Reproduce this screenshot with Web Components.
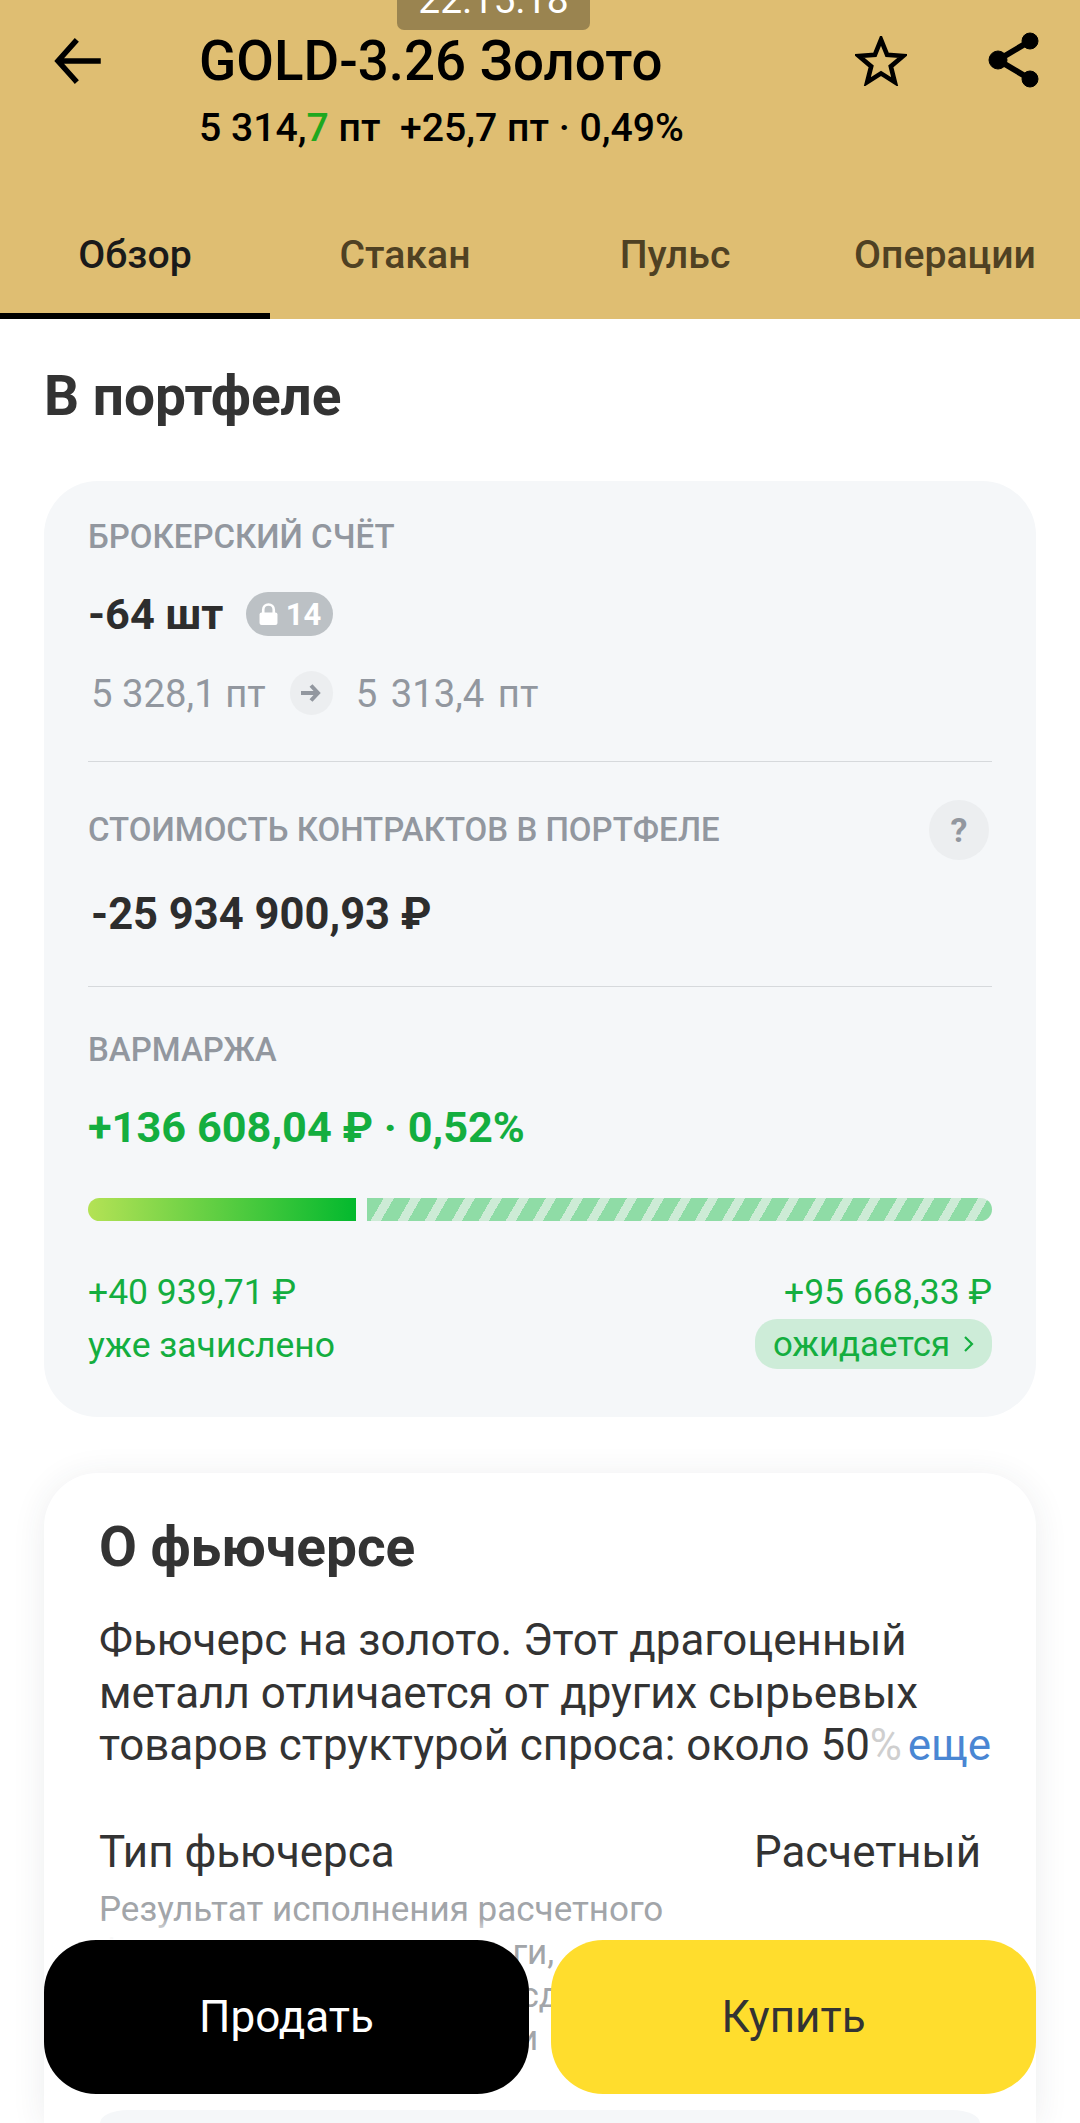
<!DOCTYPE html>
<html lang="ru">
<head>
<meta charset="UTF-8">
<title>GOLD-3.26</title>
<style>
    html, body { margin: 0; height: 2123px; overflow: hidden; background: #fff; }
    body { font-family: Roboto, "Liberation Sans", sans-serif; color: #333; position: relative; }
    main { display: block; padding: 0 44px; }
</style>
</head>
<body>
<gold-header></gold-header>
<main>
    <portfolio-card></portfolio-card>
    <about-card></about-card>
</main>
<trade-buttons></trade-buttons>

<script>
    function define(name, html) {
        customElements.define(name, class extends HTMLElement {
            connectedCallback() {
                if (this.shadowRoot) return;
                this.attachShadow({ mode: "open" }).innerHTML = html;
            }
        });
    }

    define("gold-header", `
        <style>
            :host { display: block; height: 319px; background: #dfbe72; position: relative; color: #000; }
            .time { position: absolute; left: 397px; top: 0; width: 193px; height: 30px; background: #9a8450; border-radius: 0 0 7px 7px;
                overflow: hidden; color: #fff; font-size: 39px; text-align: center; line-height: 28px; }
            .time span { position: relative; top: -14px; }
            .top { display: flex; height: 214px; box-sizing: border-box; padding-top: 30px; }
            .back { width: 199px; flex: none; padding: 0 0 0 53px; box-sizing: border-box; }
            .back svg { display: block; margin-top: 8px; }
            .names { flex: 1; }
            h1 { margin: 0; font-size: 54.700px; font-weight: 500; line-height: 62px; white-space: nowrap; }
            .price { font-size: 39.200px; font-weight: 500; line-height: 42px; margin-top: 15px; white-space: pre; }
            .price b { color: #1fa81f; font-weight: 500; }
            .star { position: absolute; left: 855px; top: 36px; }
            .share { position: absolute; left: 988px; top: 31px; }
            nav { display: grid; grid-template-columns: 270px 270px 270px 270px; height: 105px; }
            nav a { font-size: 39.200px; font-weight: 500; color: #4f4123; text-align: center; line-height: 82px; box-sizing: border-box; white-space: nowrap; }
            nav a.on { color: #1a1a1a; border-bottom: 6px solid #000; }
        </style>
        <div class="time"><span>22:15:18</span></div>
        <div class="top">
            <div class="back">
                <svg width="48" height="48" viewBox="0 0 48 48" fill="none" stroke="#000" stroke-width="5.5" stroke-linecap="square">
                    <path d="M22 4 5 23l17 19M7 23h38"/>
                </svg>
            </div>
            <div class="names">
                <h1>GOLD-3.26 Золото</h1>
                <div class="price">5 314,<b>7</b> пт  +25,7 пт · 0,49%</div>
            </div>
        </div>
        <svg class="star" width="52" height="50" viewBox="0 0 56 54" fill="none" stroke="#000" stroke-width="5" stroke-linejoin="miter">
            <path d="M28 4l6.6 16.4 17.4 1.2-13.4 11.2 4.3 17L28 40.4 13.1 49.800l4.300-17L4 21.600l17.400-1.200z"/>
        </svg>
        <svg class="share" width="52" height="58" viewBox="0 0 52 58" fill="#000" stroke="#000">
            <circle cx="42" cy="10" r="8"/><circle cx="10" cy="29" r="9"/><circle cx="42" cy="48" r="8"/>
            <path d="M42 10 10 29l32 19" fill="none" stroke-width="6"/>
        </svg>
        <nav><a class="on">Обзор</a><a>Стакан</a><a>Пульс</a><a>Операции</a></nav>
    `);

    define("money-bar", `
        <style>
            :host { display: flex; gap: 11px; height: 23px; }
            .done { width: 268px; border-radius: 12px 0 0 12px; background: linear-gradient(90deg, #b4e255, #03b92e); }
            .wait { flex: 1; border-radius: 0 12px 12px 0;
                background: repeating-linear-gradient(120deg, #8fdca6 0 14.500px, #cdebd6 14.500px 23.400px); }
        </style>
        <div class="done"></div><div class="wait"></div>
    `);

    define("portfolio-card", `
        <style>
            :host { display: block; }
            h2 { margin: 0; padding-top: 47px; height: 115px; box-sizing: border-box; font-size: 55px; line-height: 60px; font-weight: 700; color: #333; }
            .card { height: 936px; margin-top: 47px; box-sizing: border-box; background: #f5f7f9; border-radius: 54px; padding: 37px 44px 0; }
            .cap { font-size: 33px; line-height: 38px; font-weight: 500; color: #92979f; white-space: nowrap; }
            .qty { display: flex; align-items: center; gap: 23px; margin-top: 30px; height: 56px; font-size: 43.300px; font-weight: 700; color: #2d2d2d; }
            .lock { display: flex; align-items: center; justify-content: center; gap: 8px; width: 87px; height: 44px; border-radius: 22px; background: #bcc1c5;
                color: #fff; font-size: 31px; font-weight: 700; }
            .avg { display: flex; align-items: center; margin-top: 29px; height: 44px; font-size: 38.300px; color: #92979f; padding-left: 3px; white-space: pre; }
            .avg .to { word-spacing: 4px; }
            .arrow { width: 43px; height: 44px; border-radius: 22px; background: #eceef0; display: flex; align-items: center; justify-content: center; margin: 0 23px 0 24px; }
            hr { border: 0; border-top: 1px solid #d6d9dc; margin: 0; }
            .one { margin-top: 46px; }
            .row { display: flex; justify-content: space-between; align-items: center; height: 62px; margin-top: 37px; padding-right: 3px; }
            .ask { width: 60px; height: 60px; border-radius: 50%; background: #eceef0; color: #92979f; font-size: 34px; font-weight: 700; text-align: center; line-height: 60px; }
            .cost { font-size: 43.500px; font-weight: 700; color: #2d2d2d; margin: 28px 0 0 3px; line-height: 52px; }
            .two { margin-top: 45px; }
            .var { margin-top: 44px; }
            .sum { margin-top: 33px; font-size: 43.300px; line-height: 52px; font-weight: 700; color: #14ae3f; white-space: nowrap; }
            money-bar { margin-top: 44px; }
            .foot { display: flex; justify-content: space-between; margin-top: 50px; color: #14ae3f; font-size: 35.500px; line-height: 42px; }
            .foot div:last-child { text-align: right; }
            .foot p { margin: 0; }
            .wait-tag { display: inline-flex; align-items: center; gap: 13px; height: 50px; margin-top: 6px; padding: 0 18px; background: #cdecd8; border-radius: 22px; font-size: 34.800px; }
            .foot .plain { margin-top: 11px; }
        </style>
        <h2>В портфеле</h2>
        <div class="card">
            <div class="cap">БРОКЕРСКИЙ СЧЁТ</div>
            <div class="qty">-64 шт
                <span class="lock">
                    <svg width="19" height="23" viewBox="0 0 18 21"><path d="M4 9V6a5 5 0 0 1 10 0v3" fill="none" stroke="#fff" stroke-width="2.500"/><rect x="0.500" y="8.500" width="17" height="12" rx="2" fill="#fff"/></svg>
                    14
                </span>
            </div>
            <div class="avg">5 328,1 пт<span class="arrow"><svg width="22" height="20" viewBox="0 0 22 20" fill="none" stroke="#92979f" stroke-width="4"><path d="M11 2.500 18 10l-7 7.500M1 10h16"/></svg></span><span class="to">5 313,4 пт</span></div>
            <hr class="one">
            <div class="row"><span class="cap">СТОИМОСТЬ КОНТРАКТОВ В ПОРТФЕЛЕ</span><span class="ask">?</span></div>
            <div class="cost">-25 934 900,93 ₽</div>
            <hr class="two">
            <div class="cap var">ВАРМАРЖА</div>
            <div class="sum">+136 608,04 ₽ · 0,52%</div>
            <money-bar></money-bar>
            <div class="foot">
                <div><p>+40 939,71 ₽</p><p class="plain">уже зачислено</p></div>
                <div><p>+95 668,33 ₽</p><span class="wait-tag">ожидается<svg width="11" height="18" viewBox="0 0 11 18" fill="none" stroke="#14ae3f" stroke-width="2.200"><path d="M2 2l7 7-7 7"/></svg></span></div>
            </div>
        </div>
    `);

    define("about-card", `
        <style>
            :host { display: block; box-sizing: border-box; margin-top: 56px; background: #fff; border-radius: 54px 54px 0 0; box-shadow: 0 4px 34px rgba(40,50,70,.09); padding: 44px 12px 0 55px; height: 650px; }
            h2 { margin: 0; font-size: 55px; line-height: 60px; font-weight: 700; color: #333; }
            .text { position: relative; margin-top: 37px; font-size: 43.900px; line-height: 52.500px; color: #333; white-space: nowrap; }
            .text p { margin: 0; }
            .more { color: #4a86d3; position: absolute; right: 33px; bottom: 0; padding-left: 8px; }
            .text i { font-style: normal; color: #cfcfcf; }
            .type { display: flex; justify-content: space-between; margin-top: 55px; font-size: 43.900px; line-height: 50px; padding-right: 43px; color: #333; }
            .note { margin-top: 11px; font-size: 35px; line-height: 43px; color: #a2a5a9; white-space: nowrap; }
            .note p { margin: 0; }
            .next { position: absolute; left: 100px; top: 2110px; width: 880px; height: 13px; border-radius: 28px 28px 0 0 / 13px 13px 0 0; background: #f5f7f9; }
        </style>
        <h2>О фьючерсе</h2>
        <div class="text">
            <p>Фьючерс на золото. Этот драгоценный</p>
            <p>металл отличается от других сырьевых</p>
            <p>товаров структурой спроса: около 50<i>%</i></p>
            <span class="more">еще</span>
        </div>
        <div class="type"><span>Тип фьючерса</span><span>Расчетный</span></div>
        <div class="note">
            <p>Результат исполнения расчетного</p>
            <p>фьючерса — только деньги,</p>
            <p>без поставки актива, все сделки</p>
            <p>расчеты только в рублях и</p>
        </div>
        <div class="next"></div>
    `);

    define("trade-buttons", `
        <style>
            :host { position: absolute; left: 44px; top: 1918px; width: 992px; display: block; }
            .fade { height: 22px; background: linear-gradient(rgba(255,255,255,0), #fff); }
            .row { display: flex; gap: 22px; }
            button { flex: 1; height: 154px; border: 0; border-radius: 52px; font: 400 44px Roboto, sans-serif; }
            .sell { background: #000; color: #fff; }
            .buy { background: #ffdd2d; color: #333; }
        </style>
        <div class="fade"></div>
        <div class="row"><button class="sell">Продать</button><button class="buy">Купить</button></div>
    `);
</script>
</body>
</html>
